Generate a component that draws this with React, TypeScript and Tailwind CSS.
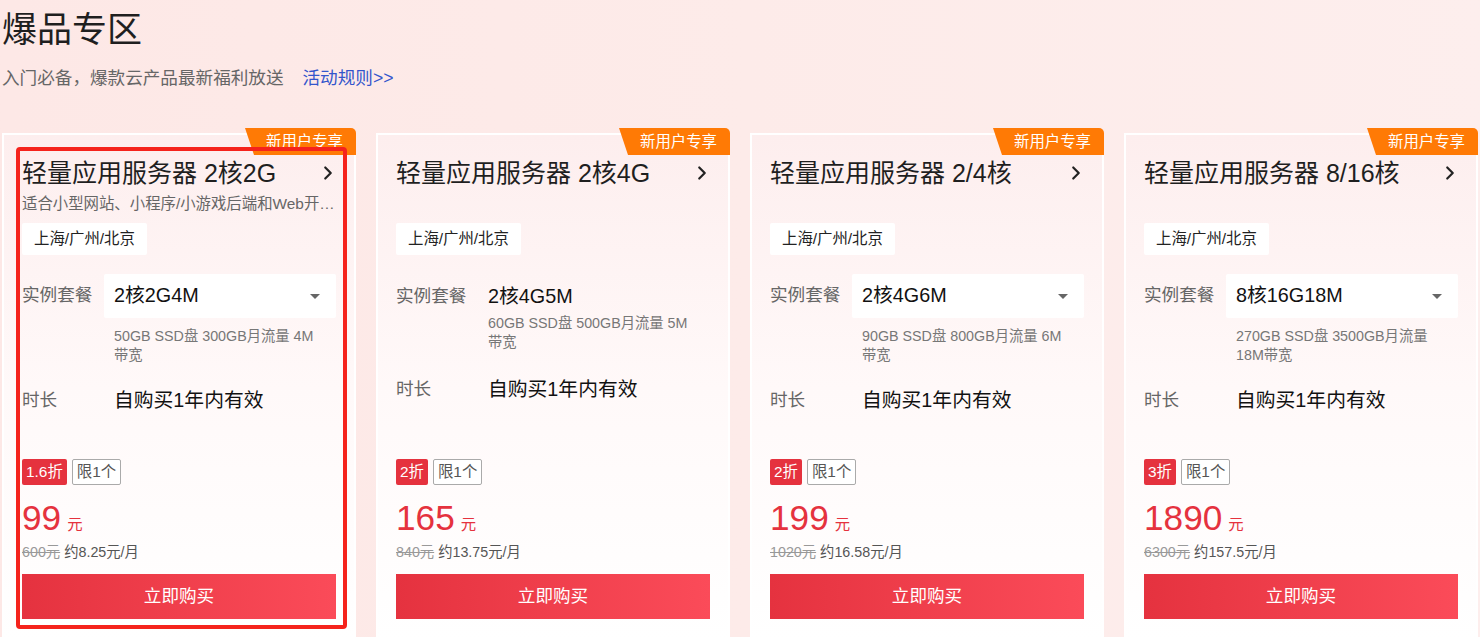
import { ChevronRight } from "lucide-react";

type Plan = {
  title: string;
  desc: string;
  plan: string;
  select: boolean;
  spec: string;
  discount: string;
  price: string;
  orig: string;
  monthly: string;
};

const plans: Plan[] = [
  {
    title: "轻量应用服务器 2核2G",
    desc: "适合小型网站、小程序/小游戏后端和Web开发测试环境",
    plan: "2核2G4M",
    select: true,
    spec: "50GB SSD盘 300GB月流量 4M带宽",
    discount: "1.6折",
    price: "99",
    orig: "600元",
    monthly: "约8.25元/月",
  },
  {
    title: "轻量应用服务器 2核4G",
    desc: "",
    plan: "2核4G5M",
    select: false,
    spec: "60GB SSD盘 500GB月流量 5M带宽",
    discount: "2折",
    price: "165",
    orig: "840元",
    monthly: "约13.75元/月",
  },
  {
    title: "轻量应用服务器 2/4核",
    desc: "",
    plan: "2核4G6M",
    select: true,
    spec: "90GB SSD盘 800GB月流量 6M带宽",
    discount: "2折",
    price: "199",
    orig: "1020元",
    monthly: "约16.58元/月",
  },
  {
    title: "轻量应用服务器 8/16核",
    desc: "",
    plan: "8核16G18M",
    select: true,
    spec: "270GB SSD盘 3500GB月流量 18M带宽",
    discount: "3折",
    price: "1890",
    orig: "6300元",
    monthly: "约157.5元/月",
  },
];

function PlanCard({ item, active }: { item: Plan; active?: boolean }) {
  return (
    <div className="relative h-[508px] border-2 border-white bg-gradient-to-b from-[#fdeeee] via-[#fff9f9] to-white px-[18px] pt-[20px]">
      <div className="absolute right-[-2px] top-[-7px] flex h-[27px] w-[111px] items-center justify-center rounded-tr-[5px] bg-[#ff7a05] pl-[8px] text-[15.4px] text-white [clip-path:polygon(0_0,100%_0,100%_100%,9px_100%)]">
        新用户专享
      </div>
      {active && (
        <div className="pointer-events-none absolute left-[12px] top-[12px] h-[482px] w-[331px] rounded-[4px] border-4 border-[#f5231c]" />
      )}

      <div className="h-[304px]">
        <div className="flex h-[36px] items-center justify-between">
          <span className="text-[25px] leading-[36px] text-[#1f1f1f]">{item.title}</span>
          <ChevronRight size={22} strokeWidth={2.4} className="mr-[-3px] text-[#222]" />
        </div>
        <div className="mt-[3px] h-[20px] truncate text-[15.4px] leading-[20px] text-[#666]">
          {item.desc}
        </div>
        <div className="mt-[9px] inline-flex h-[32px] items-center rounded-[2px] bg-white px-[12px] text-[15.4px] text-[#222]">
          上海/广州/北京
        </div>

        {item.select ? (
          <div className="mt-[19px] flex">
            <div className="w-[82px] text-[17.6px] leading-[42px] text-[#666]">实例套餐</div>
            <div className="flex-1">
              <div className="flex h-[44px] items-center justify-between rounded-[2px] bg-white pl-[10px] pr-[16px]">
                <span className="text-[19.8px] text-[#111]">{item.plan}</span>
                <svg width="10" height="5" viewBox="0 0 10 5">
                  <polygon points="0,0 10,0 5,5" fill="#666" />
                </svg>
              </div>
              <div className="mt-[9px] pl-[10px] pr-[10px] text-[14.3px] leading-[19px] text-[#777]">
                {item.spec}
              </div>
            </div>
          </div>
        ) : (
          <div className="mt-[26px] flex">
            <div className="w-[82px] text-[17.6px] leading-[30px] text-[#666]">实例套餐</div>
            <div className="flex-1">
              <div className="pl-[10px] text-[19.8px] leading-[30px] text-[#111]">{item.plan}</div>
              <div className="mt-[3px] pl-[10px] pr-[10px] text-[14.3px] leading-[19px] text-[#777]">
                {item.spec}
              </div>
            </div>
          </div>
        )}

        <div className={`flex ${item.select ? "mt-[21px]" : "mt-[23px]"}`}>
          <div className="w-[82px] text-[17.6px] leading-[28px] text-[#666]">时长</div>
          <div className="pl-[10px] text-[19.8px] leading-[28px] text-[#111]">自购买1年内有效</div>
        </div>
      </div>

      <div className="flex h-[26px] gap-[5px]">
        <span className="flex items-center rounded-[2px] bg-[#e5323e] px-[4px] text-[15.4px] text-white">
          {item.discount}
        </span>
        <span className="flex items-center rounded-[2px] border border-[#aaa] bg-white px-[4px] text-[15.4px] text-[#555]">
          限1个
        </span>
      </div>
      <div className="mt-[13px] flex h-[40px] items-baseline overflow-hidden pt-[1px] text-[#e5323e]">
        <span className="text-[35.2px] leading-[38px]">{item.price}</span>
        <span className="ml-[6px] text-[15.4px] leading-[20px]">元</span>
      </div>
      <div className="mt-[4px] text-[14.3px] leading-[20px]">
        <span className="text-[#999] line-through">{item.orig}</span>
        <span className="ml-[4px] text-[#555]">{item.monthly}</span>
      </div>
      <button className="mt-[12px] flex h-[45px] w-full items-center justify-center bg-gradient-to-r from-[#e5323f] to-[#fb4b59] text-[17.6px] text-white">
        立即购买
      </button>
    </div>
  );
}

export default function App() {
  return (
    <div className="h-[637px] overflow-hidden bg-gradient-to-r from-[#fde8e6] via-[#fdebe9] to-[#fdeeed] px-[2px] font-['Liberation_Sans','Noto_Sans_CJK_SC',sans-serif]">
      <h1 className="pt-[9px] text-[35px] leading-[42px] text-[#1f1f1f]">爆品专区</h1>
      <div className="mt-[15px] flex items-center text-[17.6px] leading-[24px]">
        <span className="text-[#666]">入门必备，爆款云产品最新福利放送</span>
        <a className="ml-[19px] text-[#3355cc]">活动规则&gt;&gt;</a>
      </div>
      <div className="mt-[43px] grid grid-cols-4 gap-[20px]">
        {plans.map((p, i) => (
          <PlanCard key={p.title} item={p} active={i === 0} />
        ))}
      </div>
    </div>
  );
}
